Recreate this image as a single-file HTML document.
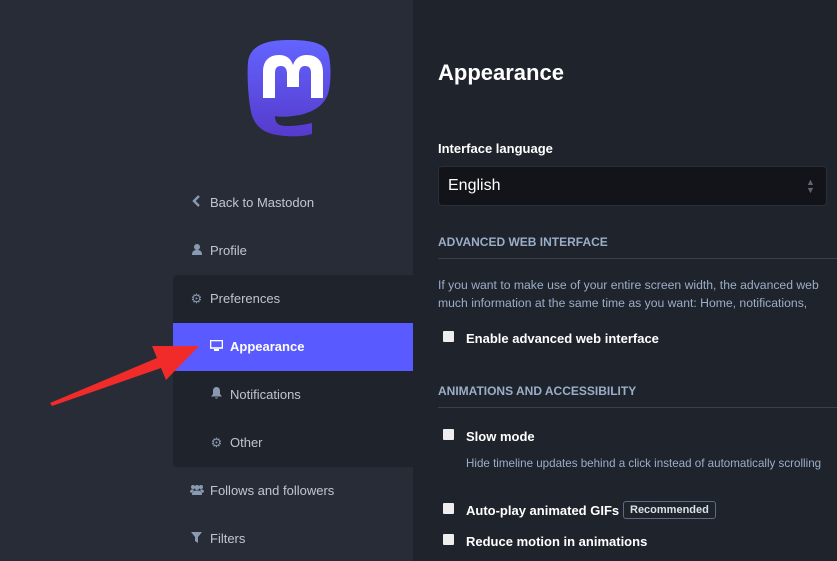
<!DOCTYPE html><html><head><style>
body{margin:0;width:837px;height:561px;overflow:hidden;background:#1f232b;font-family:"Liberation Sans",sans-serif;position:relative}
.a{position:absolute}
.side{left:0;top:0;width:413px;height:561px;background:#282c37}
.grp{left:173px;top:275px;width:240px;height:192px;background:#1f232b;border-radius:4px 0 0 4px}
.it{position:absolute;font-size:13px;color:#d9e1e8;opacity:.85;white-space:nowrap}
.ic{display:inline-block;width:13px;color:#9baec8;font-size:13px;margin-right:7px;text-align:center}
.lab{color:#fff;font-weight:bold;font-size:13px}
.h{color:#9baec8;font-weight:bold;font-size:12px}
.cb{position:absolute;width:11px;height:11px;background:#eee;border-radius:1px}
.hint{color:#9baec8;font-size:12.2px}
</style></head><body>
<div class="a side"></div>
<div class="a grp"></div>
<div class="a" style="left:173px;top:323px;width:240px;height:48px;background:#595aff"></div>
<svg class="a" style="left:247px;top:40px" width="84" height="98" viewBox="0 0 84 98">
<defs><linearGradient id="g" x1="0" y1="0" x2="0" y2="1"><stop offset="0" stop-color="#6364ff"/><stop offset="1" stop-color="#563acc"/></linearGradient></defs>
<path d="M42 0C64 0 80 3 82 16C84 26 84 40 82 50C79 66 64 74 46 76C38 77 32 77 28 76C28 84 32 86 40 86C48 86 56 85 65 83V94C54 97 42 97 30 95C12 92 5 82 3 66C1 54 0 34 1 22C3 5 20 0 42 0Z" fill="url(#g)"/>
<path d="M16 58V32C16 21 22 15 32 15C40 15 44 19 46 25C48 19 52 15 60 15C70 15 76 21 76 32V58H64V33C64 28 62 26 58 26C54 26 52 29 52 34V47H40V34C40 29 38 26 34 26C30 26 28 28 28 33V58Z" fill="#fff"/>
</svg>
<div class="it" style="left:190px;top:195px"><span class="ic"><svg width="9" height="12" viewBox="0 0 9 12"><path d="M7 1L2 6L7 11" fill="none" stroke="#9baec8" stroke-width="2.4"/></svg></span>Back to Mastodon</div>
<div class="it" style="left:190px;top:243px"><span class="ic"><svg width="10" height="11" viewBox="0 0 10 11"><circle cx="5" cy="3" r="3" fill="#9baec8"/><path d="M0 11C0 7 2 6 5 6S10 7 10 11Z" fill="#9baec8"/></svg></span>Profile</div>
<div class="it" style="left:190px;top:291px"><span class="ic">⚙</span>Preferences</div>
<div class="it" style="left:210px;top:339px;color:#fff;opacity:1;font-weight:bold"><span class="ic"><svg width="13" height="11" viewBox="0 0 13 11"><rect x="0.5" y="0.5" width="12" height="7.5" fill="none" stroke="#fff" stroke-width="1.6"/><rect x="4" y="9" width="5" height="2" fill="#fff"/></svg></span>Appearance</div>
<div class="it" style="left:210px;top:387px"><span class="ic"><svg width="11" height="12" viewBox="0 0 11 12"><path d="M5.5 0C8 0 9 2 9 4V7L11 9.5H0L2 7V4C2 2 3 0 5.5 0Z M4 10.5H7C7 12 4 12 4 10.5Z" fill="#9baec8"/></svg></span>Notifications</div>
<div class="it" style="left:210px;top:435px"><span class="ic">⚙</span>Other</div>
<div class="it" style="left:190px;top:483px"><span class="ic"><svg width="14" height="11" viewBox="0 0 14 11"><circle cx="3" cy="3" r="2" fill="#9baec8"/><circle cx="11" cy="3" r="2" fill="#9baec8"/><circle cx="7" cy="3.5" r="2.5" fill="#9baec8"/><path d="M2 11C2 7 4 6.5 7 6.5S12 7 12 11Z M0 8C0 5.5 2 5 4 5.5L2 9Z M14 8C14 5.5 12 5 10 5.5L12 9Z" fill="#9baec8"/></svg></span>Follows and followers</div>
<div class="it" style="left:190px;top:531px"><span class="ic"><svg width="11" height="11" viewBox="0 0 11 11"><path d="M0 0H11L7 5V11L4 9V5Z" fill="#9baec8"/></svg></span>Filters</div>
<div class="a" style="left:438px;top:60px;color:#fff;font-weight:bold;font-size:22px">Appearance</div>
<div class="a lab" style="left:438px;top:141px">Interface language</div>
<div class="a" style="left:438px;top:166px;width:389px;height:40px;background:#131419;border:1px solid #2a2e38;border-radius:4px;box-sizing:border-box"></div>
<div class="a" style="left:448px;top:177px;color:#fff;font-size:16px">English</div>
<div class="a" style="left:806px;top:178px;color:#5f6575;font-size:9px;line-height:8px">▲<br>▼</div>
<div class="a h" style="left:438px;top:235px">ADVANCED WEB INTERFACE</div>
<div class="a" style="left:438px;top:258px;width:399px;height:1px;background:#393f4f"></div>
<div class="a hint" style="left:438px;top:276px;line-height:18px;white-space:nowrap">If you want to make use of your entire screen width, the advanced web<br>much information at the same time as you want: Home, notifications,</div>
<div class="cb" style="left:443px;top:331px"></div><div class="a lab" style="left:466px;top:331px">Enable advanced web interface</div>
<div class="a h" style="left:438px;top:384px">ANIMATIONS AND ACCESSIBILITY</div>
<div class="a" style="left:438px;top:407px;width:399px;height:1px;background:#393f4f"></div>
<div class="cb" style="left:443px;top:429px"></div><div class="a lab" style="left:466px;top:429px">Slow mode</div>
<div class="a hint" style="left:466px;top:457px;font-size:11.6px;white-space:nowrap">Hide timeline updates behind a click instead of automatically scrolling</div>
<div class="cb" style="left:443px;top:503px"></div><div class="a lab" style="left:466px;top:503px">Auto-play animated GIFs</div>
<div class="a" style="left:623px;top:501px;border:1px solid #606984;border-radius:3px;color:#d9e1e8;font-size:11px;font-weight:bold;padding:2px 6px">Recommended</div>
<div class="cb" style="left:443px;top:534px"></div><div class="a lab" style="left:466px;top:534px">Reduce motion in animations</div>
<svg class="a" style="left:0;top:0" width="420" height="420"><path d="M50 403L157 358L152 346L199 346L166 380L161 368L52 406Z" fill="#f12a2a"/></svg>
</body></html>
